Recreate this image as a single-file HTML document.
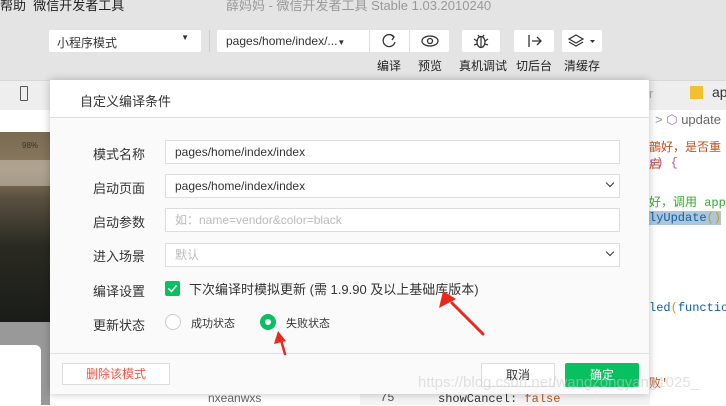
<!DOCTYPE html>
<html><head><meta charset="utf-8"><style>
*{box-sizing:border-box;margin:0;padding:0}
body{width:726px;height:405px;overflow:hidden;position:relative;background:#fff;font-family:"Liberation Sans","Noto Sans CJK SC",sans-serif;font-size:12px;color:#333}
.a{position:absolute}
.btn{background:#fff;border-radius:2px}
.code{font-family:"Liberation Mono","Noto Sans CJK SC",monospace;font-size:12px}
.inp{position:absolute;left:165px;width:455px;height:24px;border:1px solid #ddd;background:#fff;padding-left:9px;line-height:22px;font-size:12px}
.lab{position:absolute;left:93px;font-size:13px;color:#333}
.chev{position:absolute;right:6px;top:5px;width:6px;height:6px;border-right:1.5px solid #333;border-bottom:1.5px solid #333;transform:rotate(45deg)}
</style></head><body>
<div class="a" style="left:0;top:0;width:726px;height:80px;background:#e4e4e4"></div>
<div class="a" style="left:0;top:-5px;font-size:13px;color:#222">帮助&nbsp;&nbsp;微信开发者工具</div>
<div class="a" style="left:226px;top:-5px;font-size:13px;color:#999">薛妈妈 - 微信开发者工具 Stable 1.03.2010240</div>
<div class="a btn" style="left:49px;top:30px;width:152px;height:22px;padding:4px 8px;font-size:12px">小程序模式<span style="position:absolute;right:12px;top:3px;font-size:8px">▼</span></div>
<div class="a" style="left:209px;top:30px;width:1px;height:22px;background:#ccc"></div>
<div class="a btn" style="left:217px;top:30px;width:232px;height:22px"></div>
<div class="a" style="left:226px;top:34px;font-size:12px">pages/home/index/...<span style="font-size:8px">▼</span></div>
<div class="a" style="left:369px;top:30px;width:1px;height:22px;background:#ddd"></div>
<div class="a" style="left:409px;top:30px;width:1px;height:22px;background:#ddd"></div>
<svg class="a" style="left:382px;top:33px" width="16" height="16"><path d="M12 4A6 6 0 1 0 13 9" fill="none" stroke="#333" stroke-width="1.3"/><path d="M9 2l3 2-2 3" fill="none" stroke="#333" stroke-width="1.3"/></svg>
<svg class="a" style="left:421px;top:34px" width="18" height="14"><ellipse cx="9" cy="7" rx="8" ry="5" fill="none" stroke="#333" stroke-width="1.3"/><circle cx="9" cy="7" r="2.5" fill="none" stroke="#333" stroke-width="1.3"/></svg>
<div class="a btn" style="left:462px;top:30px;width:38px;height:22px"></div>
<svg class="a" style="left:472px;top:33px" width="18" height="16"><ellipse cx="9" cy="9" rx="4" ry="5.5" fill="none" stroke="#333" stroke-width="1.3"/><path d="M9 4v10M2 6l3 2M16 6l-3 2M2 12l3-1M16 12l-3-1M6 2l1.5 2M12 2l-1.5 2" stroke="#333" stroke-width="1.2"/></svg>
<div class="a btn" style="left:514px;top:30px;width:40px;height:22px"></div>
<svg class="a" style="left:527px;top:34px" width="16" height="14"><path d="M2 1v12M5 7h9M10 3l4 4-4 4" fill="none" stroke="#333" stroke-width="1.3"/></svg>
<div class="a btn" style="left:562px;top:30px;width:40px;height:22px"></div>
<svg class="a" style="left:568px;top:33px" width="30" height="16"><path d="M8 2l7 4-7 4-7-4z" fill="none" stroke="#333" stroke-width="1.2"/><path d="M1 9l7 4 7-4" fill="none" stroke="#333" stroke-width="1.2"/><path d="M22 7h5l-2.5 3z" fill="#333"/></svg>
<div class="a" style="left:377px;top:57px;font-size:12px;color:#222">编译</div>
<div class="a" style="left:418px;top:57px;font-size:12px;color:#222">预览</div>
<div class="a" style="left:459px;top:57px;font-size:12px;color:#222">真机调试</div>
<div class="a" style="left:516px;top:57px;font-size:12px;color:#222">切后台</div>
<div class="a" style="left:564px;top:57px;font-size:12px;color:#222">清缓存</div>
<div class="a" style="left:0;top:80px;width:726px;height:30px;background:#eeeeee;border-top:1px solid #d8d8d8"></div>
<div class="a" style="left:20px;top:86px;width:8px;height:15px;border:1px solid #555;border-radius:1px"></div>
<div class="a" style="left:690px;top:86px;width:13px;height:13px;background:#f0c030"></div>
<div class="a" style="left:712px;top:84px;font-size:14px;color:#333">ap</div>
<div class="a" style="left:649px;top:86px;font-size:13px;color:#aaa">r</div>
<!-- phone -->
<div class="a" style="left:0;top:132px;width:50px;height:190px;background:linear-gradient(#7a6a52 0,#8a7a60 20%,#5a5040 35%,#2a2a22 60%,#1a1c18 100%)"></div>
<div class="a" style="left:0;top:160px;width:50px;height:26px;background:#c8c0b0;opacity:.6"></div>
<div class="a" style="left:22px;top:141px;font-size:8px;color:#333">98%</div>
<div class="a" style="left:0;top:322px;width:50px;height:83px;background:#999"></div>
<div class="a" style="left:0;top:345px;width:41px;height:60px;background:#fff;border-radius:0 6px 0 0"></div>
<!-- right code -->
<div class="a" style="left:649px;top:110px;width:77px;height:295px;background:#fff"></div>
<div class="a" style="left:655px;top:112px;font-size:13px;color:#999">&gt; <span style="color:#a07cc0">⬡</span> <span style="color:#666">update</span></div>
<div class="a code" style="left:649px;top:138px;color:#c0501a">鶕好，是否重启</div>
<div class="a code" style="left:649px;top:156px;color:#c050a0">s) {</div>
<div class="a code" style="left:649px;top:193px;color:#3a3">好，调用 app</div>
<div class="a code" style="left:649px;top:211px;color:#1060a0;background:#adc6dc">lyUpdate<span style="color:#c90">()</span></div>
<div class="a code" style="left:649px;top:301px;color:#1060a0">led<span style="color:#c90">(</span>function</div>
<div class="a code" style="left:649px;top:374px;color:#c0501a">败'</div>
<div class="a" style="left:360px;top:378px;width:290px;height:27px;background:#f4f4f4"></div>
<div class="a code" style="left:380px;top:391px;color:#555">75</div>
<div class="a code" style="left:438px;top:392px;color:#333">showCancel: <span style="color:#c0501a">false</span></div>
<div class="a" style="left:208px;top:391px;font-size:12px;color:#666">nxeanwxs</div>
<!-- dialog -->
<div class="a" style="left:50px;top:80px;width:599px;height:314px;background:#fafafa;box-shadow:0 0 8px rgba(0,0,0,.25)"></div>
<div class="a" style="left:50px;top:80px;width:599px;height:38px;background:#fff;border-bottom:1px solid #ddd"></div>
<div class="a" style="left:80px;top:91px;font-size:13px;color:#333">自定义编译条件</div>
<div class="lab" style="top:144px">模式名称</div>
<div class="inp" style="top:140px">pages/home/index/index</div>
<div class="lab" style="top:178px">启动页面</div>
<div class="inp" style="top:174px">pages/home/index/index<span class="chev"></span></div>
<div class="lab" style="top:212px">启动参数</div>
<div class="inp" style="top:208px;color:#bbb">如：name=vendor&amp;color=black</div>
<div class="lab" style="top:246px">进入场景</div>
<div class="inp" style="top:243px;color:#bbb">默认<span class="chev"></span></div>
<div class="lab" style="top:281px">编译设置</div>
<div class="a" style="left:165px;top:281px;width:15px;height:15px;background:#07c160;border-radius:2px"></div>
<svg class="a" style="left:165px;top:281px" width="15" height="15"><path d="M3.5 7.5l3 3 5-6" fill="none" stroke="#fff" stroke-width="1.6"/></svg>
<div class="a" style="left:189px;top:279px;font-size:13px;color:#333">下次编译时模拟更新 (需 1.9.90 及以上基础库版本)</div>
<div class="lab" style="top:315px">更新状态</div>
<div class="a" style="left:165px;top:314px;width:16px;height:16px;border:1px solid #ccc;border-radius:50%;background:#fff"></div>
<div class="a" style="left:191px;top:315px;font-size:11px;color:#333">成功状态</div>
<div class="a" style="left:260px;top:314px;width:16px;height:16px;border-radius:50%;background:#07c160"></div>
<div class="a" style="left:265px;top:319px;width:6px;height:6px;border-radius:50%;background:#fff"></div>
<div class="a" style="left:286px;top:315px;font-size:11px;color:#333">失败状态</div>
<div class="a" style="left:50px;top:353px;width:599px;height:1px;background:#e0e0e0"></div>
<div class="a" style="left:62px;top:363px;width:108px;height:22px;border:1px solid #ddd;background:#fff;color:#e54;text-align:center;line-height:20px;font-size:12px">删除该模式</div>
<div class="a" style="left:481px;top:363px;width:74px;height:24px;border:1px solid #ddd;background:#fff;text-align:center;line-height:22px;font-size:12px">取消</div>
<div class="a" style="left:565px;top:363px;width:74px;height:24px;background:#07c160;color:#fff;text-align:center;line-height:24px;font-size:12px;border-radius:2px">确定</div>
<svg class="a" style="left:0;top:0" width="726" height="405">
<path d="M483 334L452 303" stroke="#e8291c" stroke-width="3" stroke-linecap="round"/>
<path d="M443 291L439 308L456 299Z" fill="#e8291c"/>
<path d="M285 354L281 340" stroke="#e8291c" stroke-width="2.5" stroke-linecap="round"/>
<path d="M278 331L274 344L286 341Z" fill="#e8291c"/>
</svg>
<div class="a" style="left:418px;top:374px;font-size:15px;color:rgba(200,200,200,.55);white-space:nowrap">https://blog.csdn.net/wangzongyang1025_</div>
</body></html>
